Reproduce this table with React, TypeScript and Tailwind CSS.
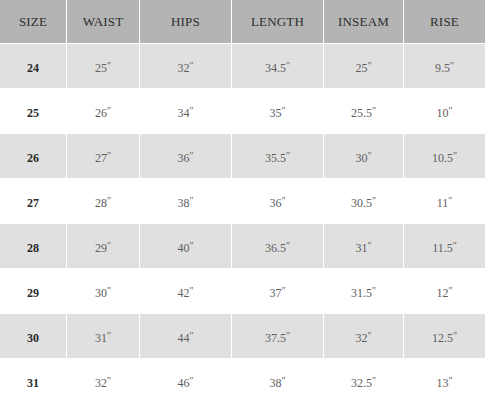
import React from "react";

const headers = ["SIZE", "WAIST", "HIPS", "LENGTH", "INSEAM", "RISE"];
const rows = [
  ["24", "25", "32", "34.5", "25", "9.5"],
  ["25", "26", "34", "35", "25.5", "10"],
  ["26", "27", "36", "35.5", "30", "10.5"],
  ["27", "28", "38", "36", "30.5", "11"],
  ["28", "29", "40", "36.5", "31", "11.5"],
  ["29", "30", "42", "37", "31.5", "12"],
  ["30", "31", "44", "37.5", "32", "12.5"],
  ["31", "32", "46", "38", "32.5", "13"],
];

export default function App() {
  return (
    <div
      className="w-[485px] h-[413px] bg-white"
      style={{ fontFamily: '"Liberation Serif", "DejaVu Serif", serif' }}
    >
      <div className="grid grid-cols-[66px_72px_91px_91px_79px_81px] gap-[1px] bg-white">
        {headers.map((h) => (
          <div
            key={h}
            className="h-[43px] bg-[#b4b4b4] flex items-center justify-center text-[13px] text-[#2e2e2e] tracking-[0.2px]"
          >
            {h}
          </div>
        ))}
        {rows.map((r, i) =>
          r.map((c, j) => (
            <div
              key={i + "-" + j}
              className={`h-[44px] flex items-center justify-center pt-[4px] ${
                i % 2 === 0 ? "bg-[#e0e0e0]" : "bg-white"
              } ${
                j === 0
                  ? "text-[12px] font-bold text-[#2a2a2a]"
                  : "text-[12px] text-[#5e5e5e]"
              }`}
            >
              {j === 0 ? (
                c
              ) : (
                <span>
                  {c}
                  <span className="text-[10px] relative -top-[3px]">″</span>
                </span>
              )}
            </div>
          ))
        )}
      </div>
    </div>
  );
}
